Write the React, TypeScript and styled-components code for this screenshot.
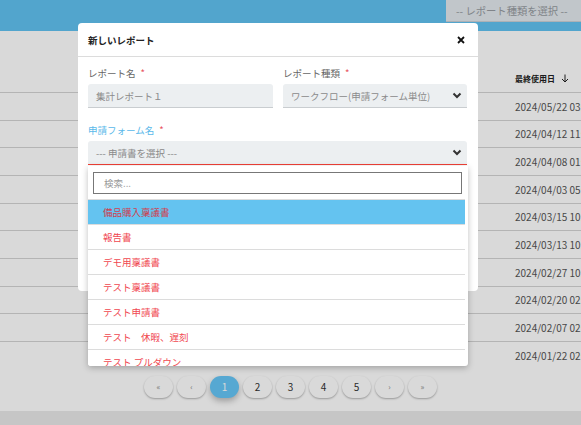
import styled, { createGlobalStyle } from 'styled-components';

const GlobalStyle = createGlobalStyle`
    body {
        margin: 0;
        font-family: "Noto Sans CJK JP", "Noto Sans", sans-serif;
    }
`

const dates = [
    '2024/05/22 03:14',
    '2024/04/12 11:02',
    '2024/04/08 01:45',
    '2024/04/03 05:20',
    '2024/03/15 10:33',
    '2024/03/13 10:18',
    '2024/02/27 10:05',
    '2024/02/20 02:41',
    '2024/02/07 02:27',
    '2024/01/22 02:10',
]

const forms = [
    '備品購入稟議書',
    '報告書',
    'デモ用稟議書',
    'テスト稟議書',
    'テスト申請書',
    'テスト　休暇、遅刻',
    'テスト プルダウン',
]

const pages = ['«', '‹', '1', '2', '3', '4', '5', '›', '»']

const Root = styled.div`
    position: relative;
    width: 581px;
    height: 425px;
    overflow: hidden;
    display: flex;
    flex-direction: column;
    background: #fff;
`
const TopBar = styled.div`
    height: 31px;
    flex: none;
    background: #61c2f1;
    display: flex;
    justify-content: flex-end;
    align-items: flex-start;
`
const TypeSelect = styled.div`
    width: 135px;
    height: 22px;
    box-sizing: border-box;
    padding-left: 10px;
    background: #e3e9ee;
    border-bottom: 1px solid #cbd1d6;
    color: #979ca1;
    font-size: 10.3px;
    line-height: 21px;
    white-space: nowrap;
`
const Main = styled.div`
    flex: 1;
    display: flex;
    flex-direction: column;
    padding-top: 33px;
`
const Table = styled.div`
    width: 640px;
`
const HeadRow = styled.div`
    display: flex;
    align-items: center;
    height: 28px;
`
const Row = styled.div`
    display: flex;
    align-items: center;
    height: 27.67px;
    box-sizing: border-box;
    border-top: 1px solid #d4d4d4;
`
const Spacer = styled.div`
    flex: 0 0 515px;
`
const HeadCell = styled.div`
    display: flex;
    align-items: center;
    gap: 6px;
    font-size: 8px;
    font-weight: bold;
    color: #222;
`
const DateCell = styled.div`
    font-size: 10px;
    color: #555;
    white-space: nowrap;
`
const Pager = styled.div`
    display: flex;
    justify-content: center;
    gap: 4px;
    margin-top: 7px;
`
const PageButton = styled.div<{ active?: boolean; arrow?: boolean }>`
    width: 29px;
    height: 22px;
    border-radius: 11px;
    display: flex;
    align-items: center;
    justify-content: center;
    background: ${({ active }) => active ? '#65c6f7' : '#fff'};
    color: ${({ active, arrow }) => active ? '#fff' : arrow ? '#8a8a8a' : '#333'};
    font-size: ${({ arrow }) => arrow ? '8px' : '10px'};
    box-shadow: ${({ active }) => active ? '0 3px 6px rgba(0,0,0,0.28)' : '0 1px 2px rgba(0,0,0,0.3)'};
`
const Footer = styled.div`
    height: 14px;
    flex: none;
    background: #e9e9e9;
`
const Overlay = styled.div`
    position: absolute;
    inset: 0;
    background: rgba(0, 0, 0, 0.15);
`
const Modal = styled.div`
    position: absolute;
    left: 78px;
    top: 23px;
    width: 400px;
    height: 268px;
    background: #fff;
    border-radius: 4px;
`
const ModalHeader = styled.div`
    height: 33px;
    display: flex;
    align-items: center;
    justify-content: space-between;
    padding: 0 13px 0 10px;
    border-bottom: 1px solid #dcdcdc;
`
const Title = styled.div`
    font-size: 9.5px;
    font-weight: bold;
    color: #222;
`
const ModalBody = styled.div`
    padding: 10px 11px 0 10px;
    display: flex;
    flex-direction: column;
    gap: 16px;
`
const FieldRow = styled.div`
    display: grid;
    grid-template-columns: 185px 184px;
    gap: 10px;
`
const Field = styled.div`
    position: relative;
    display: flex;
    flex-direction: column;
    gap: 4px;
`
const Label = styled.div<{ accent?: boolean }>`
    font-size: 9.5px;
    line-height: 13px;
    color: ${({ accent }) => accent ? '#5ab9ea' : '#666'};
`
const Required = styled.span`
    color: #e8505b;
    margin-left: 5px;
`
const Input = styled.div<{ error?: boolean }>`
    height: 24px;
    box-sizing: border-box;
    display: flex;
    align-items: center;
    justify-content: space-between;
    padding: 0 5px 0 8px;
    background: #eceff1;
    border-radius: 3px 3px 0 0;
    border-bottom: 1px solid ${({ error }) => error ? '#ef4136' : '#c9cdd0'};
    font-size: 9.5px;
    color: #8a8a8a;
    white-space: nowrap;
`
const Dropdown = styled.div`
    position: absolute;
    left: 0;
    right: -1px;
    top: 100%;
    margin-top: 1px;
    height: 200px;
    overflow: hidden;
    background: #fff;
    border-radius: 0 0 3px 3px;
    box-shadow: 0 2px 6px rgba(0, 0, 0, 0.25);
    padding-top: 6px;
    box-sizing: border-box;
`
const Search = styled.div`
    margin: 0 6px 5px 5px;
    height: 22px;
    box-sizing: border-box;
    border: 1px solid #777;
    padding-left: 10px;
    font-size: 9.5px;
    line-height: 20px;
    color: #999;
`
const List = styled.div`
    margin-right: 3px;
    border-top: 1px solid #dcdcdc;
`
const Item = styled.div<{ selected?: boolean }>`
    height: 25px;
    box-sizing: border-box;
    padding-left: 15px;
    border-bottom: 1px solid #dcdcdc;
    display: flex;
    align-items: center;
    font-size: 9.5px;
    background: ${({ selected }) => selected ? '#64c3f0' : '#fff'};
    color: ${({ selected }) => selected ? '#d0404f' : '#f0474f'};
    white-space: pre;
`

const Chevron = () => (
    <svg width="10" height="7" viewBox="0 0 10 7">
        <path d="M1.5 1.5 L5 5 L8.5 1.5" fill="none" stroke="#333" strokeWidth="2" />
    </svg>
)

const CloseIcon = () => (
    <svg width="8" height="8" viewBox="0 0 8 8">
        <path d="M1 1 L7 7 M7 1 L1 7" stroke="#111" strokeWidth="1.8" />
    </svg>
)

const SortArrow = () => (
    <svg width="8" height="9" viewBox="0 0 8 9">
        <path d="M4 0.5 V8 M1 5 L4 8 L7 5" fill="none" stroke="#222" strokeWidth="1" />
    </svg>
)

function App() {
    return (
        <Root>
            <GlobalStyle />
            <TopBar>
                <TypeSelect>-- レポート種類を選択 --</TypeSelect>
            </TopBar>
            <Main>
                <Table>
                    <HeadRow>
                        <Spacer />
                        <HeadCell>最終使用日 <SortArrow /></HeadCell>
                    </HeadRow>
                    {dates.map((d) => (
                        <Row key={d}>
                            <Spacer />
                            <DateCell>{d}</DateCell>
                        </Row>
                    ))}
                </Table>
                <Pager>
                    {pages.map((p) => (
                        <PageButton key={p} active={p === '1'} arrow={isNaN(Number(p))}>{p}</PageButton>
                    ))}
                </Pager>
            </Main>
            <Footer />
            <Overlay>
                <Modal>
                    <ModalHeader>
                        <Title>新しいレポート</Title>
                        <CloseIcon />
                    </ModalHeader>
                    <ModalBody>
                        <FieldRow>
                            <Field>
                                <Label>レポート名<Required>*</Required></Label>
                                <Input>集計レポート１</Input>
                            </Field>
                            <Field>
                                <Label>レポート種類<Required>*</Required></Label>
                                <Input>ワークフロー(申請フォーム単位)<Chevron /></Input>
                            </Field>
                        </FieldRow>
                        <Field>
                            <Label accent>申請フォーム名<Required>*</Required></Label>
                            <Input error>--- 申請書を選択 ---<Chevron /></Input>
                            <Dropdown>
                                <Search>検索...</Search>
                                <List>
                                    {forms.map((f, i) => (
                                        <Item key={f} selected={i === 0}>{f}</Item>
                                    ))}
                                </List>
                            </Dropdown>
                        </Field>
                    </ModalBody>
                </Modal>
            </Overlay>
        </Root>
    )
}
export default App
